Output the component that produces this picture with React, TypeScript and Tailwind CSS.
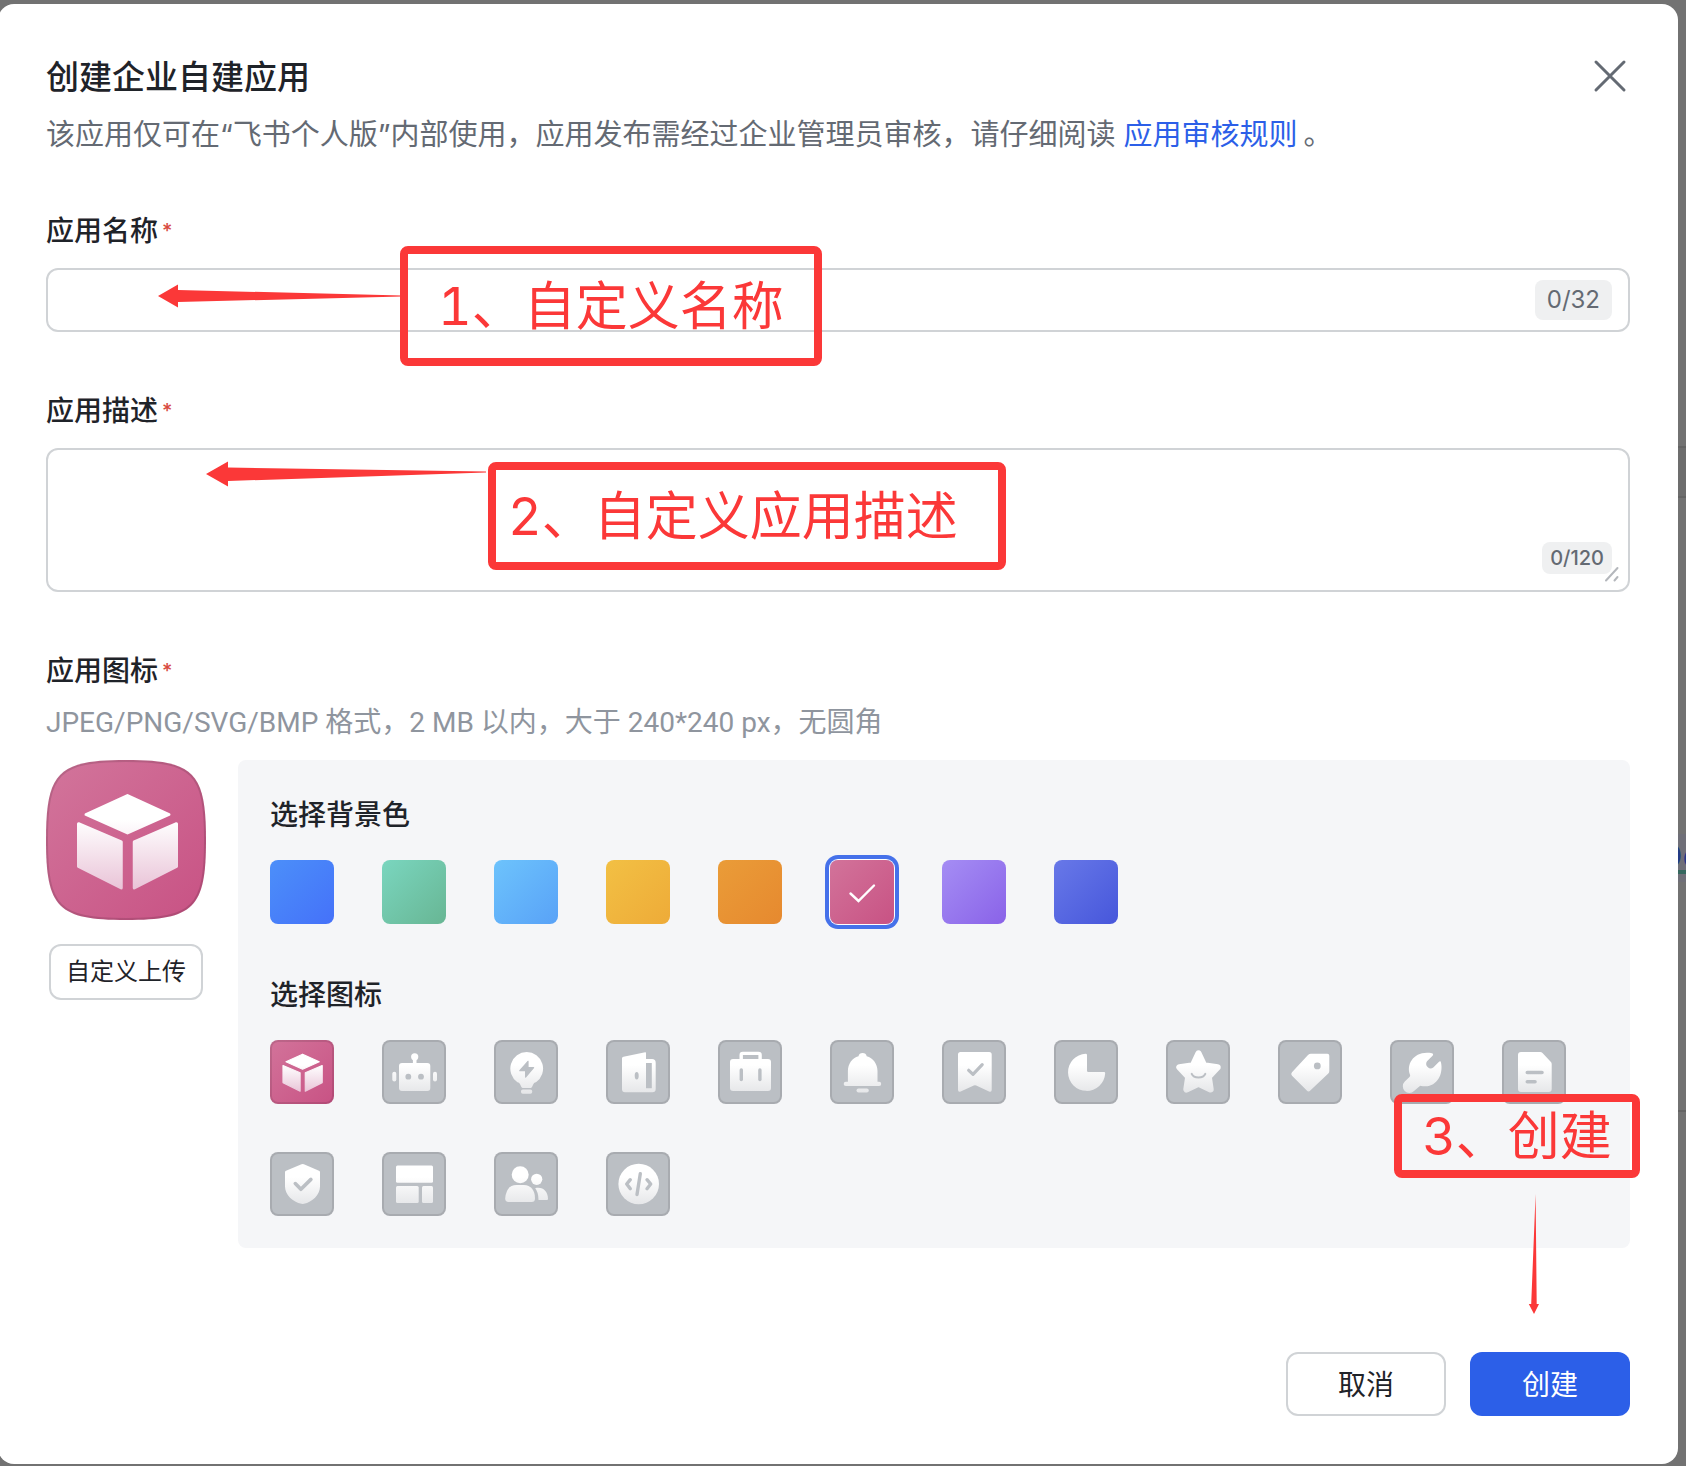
import { useId, useState, type ReactNode } from "react";

type Swatch = { name: string; className: string };

const swatches: Swatch[] = [
  { name: "蓝色", className: "from-[#4c8ff9] to-[#4571f9]" },
  { name: "绿色", className: "from-[#7ad6bf] to-[#68b694]" },
  { name: "天蓝", className: "from-[#6dc3fc] to-[#59a2f7]" },
  { name: "黄色", className: "from-[#f2c044] to-[#eeab38]" },
  { name: "橙色", className: "from-[#ea9c38] to-[#e6892f]" },
  { name: "粉色", className: "from-[#d2739a] to-[#c85284]" },
  { name: "紫色", className: "from-[#a58df4] to-[#8a62e8]" },
  { name: "靛蓝", className: "from-[#6878e8] to-[#4756db]" },
];

const HOLE = "#bbbfc4";

type Glyph = { name: string; draw: (fill: string) => ReactNode };

const cube = (fill: string) => (
  <g fill={fill} stroke={fill} strokeWidth="1.2" strokeLinejoin="round">
    <path d="M32.6 14.2 49.2 21.8 32.6 29.2 16 21.8Z" />
    <path d="M13 25.5 30.1 32.8V51.2L13 42.6Z" />
    <path d="M52.2 25.5 35.3 32.8V51.2L52.2 42.6Z" />
  </g>
);

const glyphs: Glyph[] = [
  { name: "立方体", draw: cube },
  {
    name: "机器人",
    draw: (f) => (
      <>
        <g fill={f}>
          <rect x="17" y="23" width="31.3" height="28" rx="3" />
          <circle cx="32.7" cy="16.8" r="3.6" />
          <path d="M30.9 18h3.6v6h-3.6z" />
          <rect x="10.3" y="31.7" width="4" height="9.8" rx="2" />
          <rect x="51" y="31.7" width="4" height="9.8" rx="2" />
        </g>
        <circle cx="26.3" cy="36.7" r="2.9" fill={HOLE} />
        <circle cx="39" cy="36.7" r="2.9" fill={HOLE} />
      </>
    ),
  },
  {
    name: "灯泡",
    draw: (f) => (
      <>
        <g fill={f}>
          <path d="M32.7 12a16.6 16.6 0 0 1 9.3 30.2c-1.5 .3-2.3 1-2.8 2.2l-1.2 2.6c-.3.7-.8 1-1.5 1h-7.6c-.7 0-1.2-.3-1.5-1l-1.2-2.6c-.5-1.2-1.3-1.9-2.8-2.2A16.6 16.6 0 0 1 32.7 12Z" />
          <rect x="27" y="49.5" width="11.2" height="4.2" rx="1.8" />
        </g>
        <path
          d="M34 21.3v6.4h5.6L31.6 37v-6.3h-5.8Z"
          fill={HOLE}
          stroke={HOLE}
          strokeWidth="1.2"
          strokeLinejoin="round"
        />
      </>
    ),
  },
  {
    name: "门",
    draw: (f) => (
      <>
        <path
          fill={f}
          fillRule="evenodd"
          d="M17.5 16.7 39.2 12.3q.8-.2.8.7V19h6q3.7 0 3.7 3.7V49q0 3.3-3.3 3.3H19q-3 0-3-3V18.5q0-1.5 1.5-1.8ZM40 23v25.3h5.8V23Z"
        />
        <ellipse cx="30.7" cy="35.7" rx="2" ry="3.7" fill={HOLE} />
      </>
    ),
  },
  {
    name: "公文包",
    draw: (f) => (
      <>
        <rect x="12" y="19" width="41" height="32" rx="3" fill={f} />
        <path d="M23.2 20v-5q0-1.6 1.6-1.6h15.7q1.6 0 1.6 1.6v5" fill="none" stroke="#fff" strokeWidth="3.4" />
        <g fill={HOLE}>
          <rect x="21.6" y="28.3" width="3.4" height="13" rx="1.7" />
          <rect x="40.2" y="28.3" width="3.4" height="13" rx="1.7" />
        </g>
      </>
    ),
  },
  {
    name: "铃铛",
    draw: (f) => (
      <g fill={f}>
        <path d="M17.9 42.5V31c0-7.3 4.3-13 10.6-14.8a4.2 4.2 0 0 1 8.2 0C43 18 47.5 23.7 47.5 31v11.5Z" />
        <rect x="13.7" y="41.8" width="37.5" height="4.2" rx="2.1" />
        <rect x="26.5" y="48.4" width="12.3" height="4" rx="2" />
      </g>
    ),
  },
  {
    name: "书签",
    draw: (f) => (
      <>
        <path
          fill={f}
          d="M18.5 12h28.7q2.5 0 2.5 2.5V49.7q0 3-2.7 1.8L34.2 45.6q-1.2-.6-2.4 0L18.7 51.5Q16 52.7 16 49.7V14.5Q16 12 18.5 12Z"
        />
        <path d="m26.7 30.3 4.3 4 9.2-9.6" fill="none" stroke={HOLE} strokeWidth="3.2" strokeLinecap="round" strokeLinejoin="round" />
      </>
    ),
  },
  {
    name: "饼图",
    draw: (f) => <path fill={f} d="M31.7 13.7q1.3 0 1.3 1.3V30.7q0 1.3 1.3 1.3H50q1.3 0 1.2 1.3A18.6 18.6 0 1 1 31.7 13.7Z" />,
  },
  {
    name: "星星",
    draw: (f) => (
      <>
        <path
          d="M32.5 13.5 38 25.3 51.5 27.4 42.6 36.7 44.5 49.3 32.5 43.5 20.5 49.3 22.4 36.7 13.5 27.4 27 25.3Z"
          fill={f}
          stroke={f}
          strokeWidth="6.4"
          strokeLinejoin="round"
        />
        <path d="M25.7 33.8c2 4.8 11.6 4.8 13.6 0" fill="none" stroke={HOLE} strokeWidth="2" strokeLinecap="round" />
      </>
    ),
  },
  {
    name: "标签",
    draw: (f) => (
      <>
        <path
          fill={f}
          d="M33 13.7h16.3q2 0 2 2V31q0 1.5-1 2.5L32.3 50.5q-1.8 1.8-3.5 0L14 35.7q-1.6-1.7 0-3.4L30 15q1.3-1.3 3-1.3Z"
        />
        <circle cx="39.3" cy="25.9" r="3.4" fill={HOLE} />
      </>
    ),
  },
  {
    name: "扳手",
    draw: (f) => (
      <path
        fill={f}
        d="M42.8 15.5 37 21.2A4.6 4.6 0 0 0 43.3 27.6L49 21.7q1.6-1.2 2 .7C53.5 34 47 46.2 35.5 46.2q-3.2 0-4.2-.3-1.2-.2-2 .6L24 51A6.5 6.5 0 0 1 14.8 41.6L19.5 37q.9-.8.6-2C15.6 24 24.5 10 42 13.3q1.9.5.8 2.2Z"
      />
    ),
  },
  {
    name: "文档",
    draw: (f) => (
      <>
        <path
          fill={f}
          d="M19 12h19.2q1.4 0 2.3 1l8.2 8.7q1 1 1 2.3V49q0 3-3 3H19q-3 0-3-3V15q0-3 3-3Z"
        />
        <path d="M25.3 32.5H40M25.3 41.7H33" stroke={HOLE} strokeWidth="3.6" strokeLinecap="round" />
      </>
    ),
  },
  {
    name: "盾牌",
    draw: (f) => (
      <>
        <path
          fill={f}
          d="M31.5 12.2q1.2-.6 2.4 0L49 18.7q1 .4 1 1.5V34.5C50 43 42 50 34 51.8q-1.3.3-2.6 0C23 50 15 43 15 34.5V20.2q0-1.1 1-1.5Z"
        />
        <path d="m25.3 31.6 5.6 5.7 10-9.9" fill="none" stroke={HOLE} strokeWidth="3.6" strokeLinecap="round" strokeLinejoin="round" />
      </>
    ),
  },
  {
    name: "布局",
    draw: (f) => (
      <g fill={f}>
        <rect x="14" y="13.5" width="37" height="17.3" rx="1.5" />
        <rect x="14" y="34" width="22.7" height="17" rx="1.5" />
        <rect x="40" y="34" width="11" height="17" rx="1.5" />
      </g>
    ),
  },
  {
    name: "成员",
    draw: (f) => (
      <g fill={f}>
        <circle cx="26.2" cy="22.8" r="8.5" />
        <path d="M22.5 33h7.3C37 33 41 38.5 41 46.5q0 3.5-3.5 3.5H14.5Q11 50 11.2 46.5 12.3 33 22.5 33Z" />
        <circle cx="42.7" cy="27.3" r="5.6" />
        <path d="M41.2 36.2C49 34.5 54 39.5 54 47q0 1-1 1h-8.5q0-7.8-3.3-11.8Z" />
      </g>
    ),
  },
  {
    name: "代码",
    draw: (f) => (
      <>
        <circle cx="32.7" cy="32" r="20.3" fill={f} />
        <path
          d="M34.3 21.7 31 42.5M24.3 27.7 20.7 32l3.6 4.7M41 27.7 44.7 32 41 36.7"
          fill="none"
          stroke={HOLE}
          strokeWidth="3.4"
          strokeLinecap="round"
          strokeLinejoin="round"
        />
      </>
    ),
  },
];

function GlyphArt({ glyph, pink, className }: { glyph: Glyph; pink: boolean; className: string }) {
  const id = useId();
  return (
    <svg viewBox="0 0 64 64" className={className} aria-hidden="true">
      <defs>
        <linearGradient id={id} gradientUnits="userSpaceOnUse" x1="32" y1="25" x2="32" y2="52">
          <stop offset="0" stopColor="#ffffff" />
          <stop offset="1" stopColor={pink ? "#e9c5d8" : "#e6e7e9"} />
        </linearGradient>
      </defs>
      {glyph.draw(`url(#${id})`)}
    </svg>
  );
}

function AppPreview({ glyph }: { glyph: Glyph }) {
  const shape = "M0 80C0 12 12 0 80 0S160 12 160 80 148 160 80 160 0 148 0 80Z";
  return (
    <svg viewBox="0 0 160 160" className="size-40" role="img" aria-label="应用图标预览">
      <defs>
        <linearGradient id="preview-bg" x1="0" y1="0" x2="1" y2="1">
          <stop offset="0" stopColor="#d2759b" />
          <stop offset="1" stopColor="#c85284" />
        </linearGradient>
        <linearGradient id="preview-fg" gradientUnits="userSpaceOnUse" x1="32" y1="24" x2="32" y2="52">
          <stop offset="0" stopColor="#ffffff" />
          <stop offset="1" stopColor="#e9c3d7" />
        </linearGradient>
        <clipPath id="preview-clip">
          <path d={shape} />
        </clipPath>
      </defs>
      <path d={shape} fill="url(#preview-bg)" />
      <path d={shape} fill="none" stroke="#000" strokeOpacity="0.12" strokeWidth="4" clipPath="url(#preview-clip)" />
      <g transform="scale(2.5)">{glyph.draw("url(#preview-fg)")}</g>
    </svg>
  );
}

function Required() {
  return <span className="ml-1 text-xl leading-[46px] font-medium text-[#d8493f]">*</span>;
}

function Callout({ className, children }: { className: string; children: ReactNode }) {
  return (
    <div
      className={`pointer-events-none absolute flex items-center rounded-lg border-8 border-[#fb3838] pt-0.5 text-[52px] leading-none whitespace-nowrap text-[#fb3838] tabular-nums ${className}`}
    >
      {children}
    </div>
  );
}

function BackdropStrip() {
  return (
    <div aria-hidden="true" className="absolute inset-y-0 right-0 w-2 overflow-hidden bg-[#727272]">
      <div className="mt-[446px] h-[52px] border-y-2 border-[#646464] bg-[#6d6d6d]" />
      <div className="mt-[308px] h-7" />
      <div className="flex h-12 flex-col bg-[#6f6f78]">
        <span className="-ml-5 h-9 pt-1 text-[34px] leading-9 text-[#233a85]">De</span>
        <span className="h-1 bg-[#36685f]" />
      </div>
      <div className="mt-[228px] h-0.5 bg-[#646464]" />
    </div>
  );
}

export default function App() {
  const [color, setColor] = useState(5);
  const [icon, setIcon] = useState(0);
  const [name, setName] = useState("");
  const [desc, setDesc] = useState("");

  return (
    <div className="relative overflow-hidden bg-[#727272] pt-1 pr-2 pb-0.5 font-['Inter','Noto_Sans_CJK_SC',sans-serif] text-[28px] leading-[46px] text-[#1f2329]">
      <BackdropStrip />
      <main role="dialog" aria-labelledby="dialog-title" className="relative -ml-0.5 rounded-2xl bg-white p-12">
        <header className="flex items-start justify-between">
          <div>
            <h1 id="dialog-title" className="text-[33px] leading-[50px] font-medium">
              创建企业自建应用
            </h1>
            <p className="mt-2.5 text-[29px] text-[#646a73]">
              该应用仅可在“飞书个人版”内部使用，应用发布需经过企业管理员审核，请仔细阅读
              <a href="#rules" className="mr-1.5 ml-2 text-[#2c5fe8]">
                应用审核规则
              </a>
              。
            </p>
          </div>
          <button type="button" aria-label="关闭" className="mt-1 size-10 text-[#646a73]">
            <svg viewBox="0 0 40 40" className="size-10" fill="none" stroke="currentColor" strokeWidth="3" strokeLinecap="round" aria-hidden="true">
              <path d="M6 6 34 34M34 6 6 34" />
            </svg>
          </button>
        </header>

        <form onSubmit={(e) => e.preventDefault()}>
          <div className="mt-[50px]">
            <label htmlFor="app-name" className="flex font-medium">
              应用名称
              <Required />
            </label>
            <div className="relative mt-3.5">
              <div className="flex h-16 items-center rounded-xl border-2 border-[#d0d3d6] px-4">
                <input
                  id="app-name"
                  maxLength={32}
                  value={name}
                  onChange={(e) => setName(e.target.value)}
                  className="min-w-0 flex-1 bg-transparent outline-none"
                />
                <span className="rounded-lg bg-[#eff0f1] px-3 text-2xl leading-10 text-[#646a73]">{name.length}/32</span>
              </div>
              <svg viewBox="0 0 244 24" className="pointer-events-none absolute top-4 left-28 w-61" fill="#fb3838" aria-hidden="true">
                <path d="M0 12 20 .5V6l224 5.5v1L20 18v5.5Z" />
              </svg>
              <Callout className="-top-[22px] left-[354px] h-[120px] w-[422px] pl-[30px]">1、自定义名称</Callout>
            </div>
          </div>

          <div className="mt-14">
            <label htmlFor="app-desc" className="flex font-medium">
              应用描述
              <Required />
            </label>
            <div className="relative mt-3.5">
              <textarea
                id="app-desc"
                maxLength={120}
                value={desc}
                onChange={(e) => setDesc(e.target.value)}
                className="block h-36 w-full resize-none rounded-xl border-2 border-[#d0d3d6] px-4 py-2 outline-none"
              />
              <span className="absolute right-[18px] bottom-[18px] rounded-lg bg-[#eff0f1] px-2 text-xl leading-8 font-medium text-[#646a73]">
                {desc.length}/120
              </span>
              <svg viewBox="0 0 16 16" className="pointer-events-none absolute right-2.5 bottom-2.5 size-4" fill="none" stroke="#b4b7bc" strokeWidth="2" strokeLinecap="round" aria-hidden="true">
                <path d="M2 14.5 13.5 2M10.5 14.5l3-3.5" />
              </svg>
              <svg viewBox="0 0 280 26" className="pointer-events-none absolute top-[13px] left-40 w-70" fill="#fb3838" aria-hidden="true">
                <path d="M0 13 22 .5v6L280 10.5v1L22 20v5.5Z" />
              </svg>
              <Callout className="top-3.5 left-[442px] h-[108px] w-[518px] pl-3">2、自定义应用描述</Callout>
            </div>
          </div>

          <fieldset className="mt-14">
            <legend className="flex font-medium">
              应用图标
              <Required />
            </legend>
            <p className="mt-1.5 font-['Roboto','Noto_Sans_CJK_SC',sans-serif] text-[#8f959e]">
              JPEG/PNG/SVG/BMP 格式，2 MB 以内，大于 240*240 px，无圆角
            </p>
            <div className="mt-3.5 flex items-start gap-8">
              <div className="flex shrink-0 flex-col items-center gap-6">
                <AppPreview glyph={glyphs[icon]} />
                <button type="button" className="h-14 rounded-xl border-2 border-[#d0d3d6] px-[15px] text-2xl">
                  自定义上传
                </button>
              </div>

              <div className="relative min-w-0 flex-1 rounded-lg bg-[#f5f6f8] p-8">
                <h2 className="font-medium">选择背景色</h2>
                <div className="mt-[22px] flex flex-wrap gap-12">
                  {swatches.map((s, i) => (
                    <label
                      key={s.name}
                      className={`relative size-16 rounded-lg bg-linear-to-br ${s.className} ${
                        i === color ? "shadow-[0_0_0_1px_#fff,0_0_0_5px_#4571ea]" : ""
                      }`}
                    >
                      <input type="radio" name="color" aria-label={s.name} checked={i === color} onChange={() => setColor(i)} className="sr-only" />
                      {i === color && (
                        <svg viewBox="0 0 64 64" className="size-16" fill="none" stroke="#fff" strokeWidth="2.4" strokeLinecap="round" aria-hidden="true">
                          <path d="m20.5 33.5 8 7.5 15.5-15.5" />
                        </svg>
                      )}
                    </label>
                  ))}
                </div>

                <h2 className="mt-12 font-medium">选择图标</h2>
                <div className="mt-[22px] flex flex-wrap gap-12">
                  {glyphs.map((g, i) => (
                    <label
                      key={g.name}
                      className={`relative size-16 rounded-lg border-2 border-black/10 bg-origin-border ${
                        i === icon ? "bg-linear-to-br from-[#d2739a] to-[#c85284]" : "bg-[#bbbfc4]"
                      }`}
                    >
                      <input type="radio" name="icon" aria-label={g.name} checked={i === icon} onChange={() => setIcon(i)} className="sr-only" />
                      <GlyphArt glyph={g} pink={i === icon} className="-m-0.5 size-16" />
                    </label>
                  ))}
                </div>

                <Callout className="top-[334px] -right-2.5 h-[84px] w-[246px] justify-center">3、创建</Callout>
                <svg viewBox="0 0 12 120" className="pointer-events-none absolute top-[434px] right-[90px] h-30" fill="#fb3838" aria-hidden="true">
                  <path d="M7.6 0 8.7 110h2.3L6 120 .8 110h2.4Z" />
                </svg>
              </div>
            </div>
          </fieldset>

          <footer className="mt-26 flex justify-end gap-6">
            <button type="button" className="h-16 w-40 rounded-xl border-2 border-[#d0d3d6] pt-0.5">
              取消
            </button>
            <button type="submit" className="h-16 w-40 rounded-xl bg-[#2c5fe8] pt-0.5 text-white">
              创建
            </button>
          </footer>
        </form>
      </main>
    </div>
  );
}
